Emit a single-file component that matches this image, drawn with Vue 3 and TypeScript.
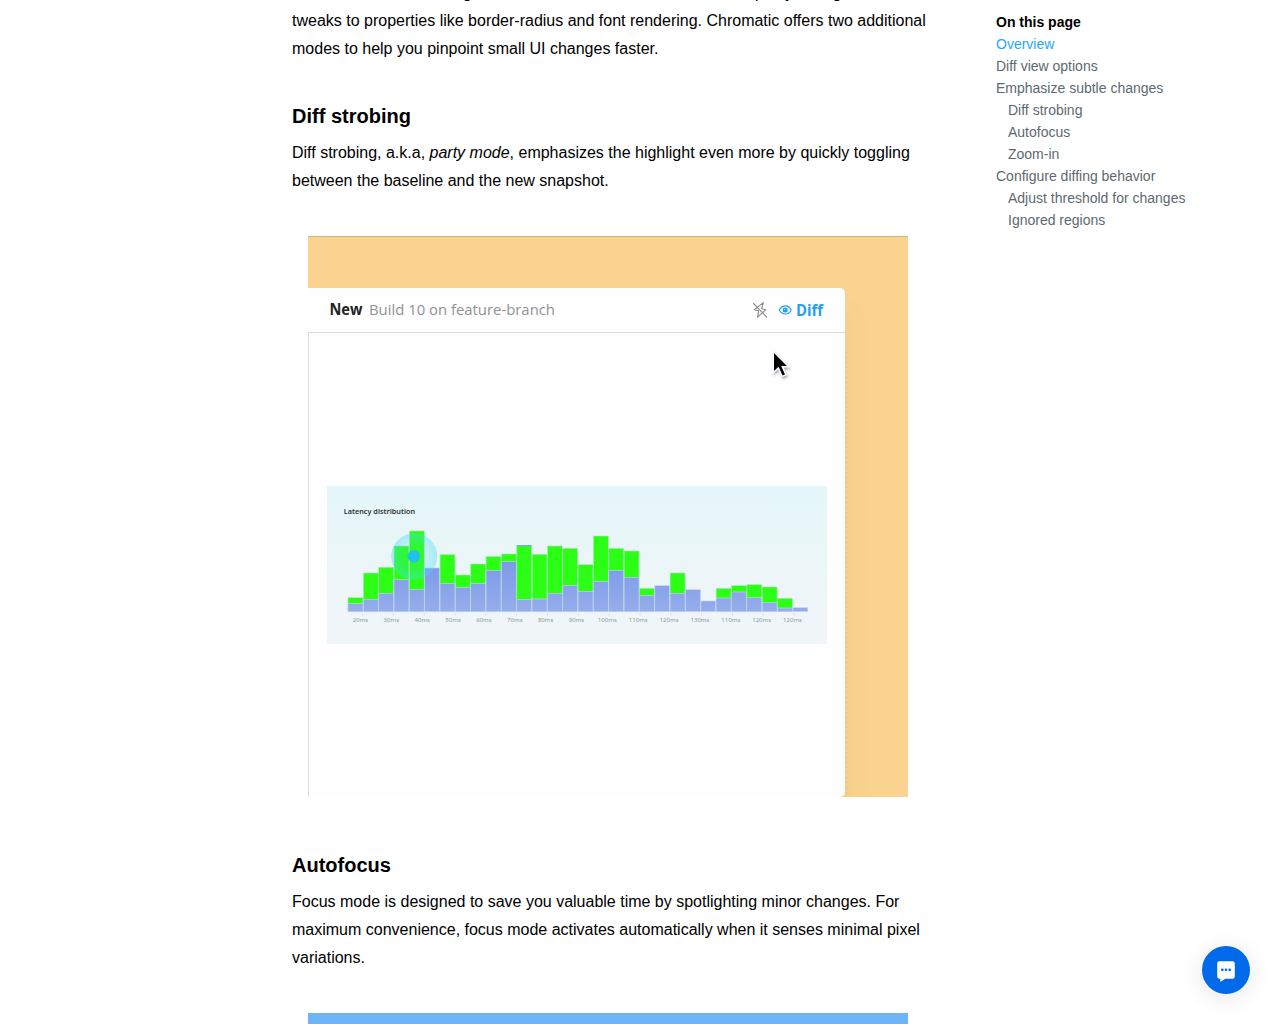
<script setup lang="ts">
interface TocItem { label: string; nested?: boolean; active?: boolean }

const toc: TocItem[] = [
  { label: 'Overview', active: true },
  { label: 'Diff view options' },
  { label: 'Emphasize subtle changes' },
  { label: 'Diff strobing', nested: true },
  { label: 'Autofocus', nested: true },
  { label: 'Zoom-in', nested: true },
  { label: 'Configure diffing behavior' },
  { label: 'Adjust threshold for changes', nested: true },
  { label: 'Ignored regions', nested: true },
]

// [height of the changed bar, height of the baseline bar], measured from the axis
const heights: [number, number][] = [
  [14, 8], [38.7, 12], [44.4, 18.4], [65.7, 32], [80.7, 22.4], [0, 43.7],
  [57, 28], [36.7, 24.4], [47.7, 28], [55.2, 41], [57.7, 50], [66.4, 12],
  [57.4, 12.7], [65.7, 18.4], [63.4, 26], [47, 20.4], [75.7, 30.4], [63.4, 41.4],
  [60.7, 34.4], [23.4, 16.4], [0, 26], [38.7, 18.4], [0, 22], [0, 10.7],
  [23.4, 13.7], [26, 19.7], [27, 14], [24.7, 9], [13.4, 3.7], [0, 4],
]
const axisY = 125.7
const pitch = 15.34
const bars = heights.map(([top, base], i) => ({ x: 21 + i * pitch, top, base }))

const labels = ['20ms', '30ms', '40ms', '50ms', '60ms', '70ms', '80ms', '90ms', '100ms', '110ms', '120ms', '130ms', '110ms', '120ms', '120ms']
const ticks = labels.map((text, i) => ({
  text,
  x: 35.6 + i * 30.82,
  labelX: 33.5 + i * 30.86,
  width: text.length > 4 ? 19 : 15.5,
}))
</script>

<template>
  <div class="page">
    <main class="content">
      <p class="lead">
        Certain faint visual changes are hard to notice on a diff. For example, you might miss<br />
        tweaks to properties like border-radius and font rendering. Chromatic offers two additional<br />
        modes to help you pinpoint small UI changes faster.
      </p>

      <h3>Diff strobing</h3>
      <p>
        Diff strobing, a.k.a, <em>party mode</em>, emphasizes the highlight even more by quickly toggling<br />
        between the baseline and the new snapshot.
      </p>

      <figure class="demo">
        <div class="window">
          <header class="bar">
            <svg class="title" width="240" height="44" viewBox="0 0 240 44">
              <text x="21.5" y="26.7" textLength="33" lengthAdjust="spacingAndGlyphs" class="new">New</text>
              <text x="61" y="26.7" textLength="186" lengthAdjust="spacingAndGlyphs" class="build">Build 10 on feature-branch</text>
            </svg>
            <svg class="tools" width="96" height="44" viewBox="0 0 96 44">
              <g fill="none" stroke="#8b8b8b" stroke-width="1.1" stroke-linejoin="round" stroke-linecap="round">
                <path d="M14.3 14.6 5.3 21.7 9.6 22.8 8.5 29.4 16.8 21.7 12.7 20.7Z" />
                <path d="M4.5 15.5 17.5 28.8" />
              </g>
              <path d="M30.2 22C33.2 16.5 39.5 16.5 42.2 22 39.5 27.4 33.2 27.4 30.2 22Z" fill="none" stroke="#1ea0f4" stroke-width="1.1" />
              <circle cx="36.2" cy="22" r="2.5" fill="#1ea0f4" />
              <circle cx="35.7" cy="21.3" r=".5" fill="#fff" />
              <text x="47" y="27.5" textLength="27" lengthAdjust="spacingAndGlyphs" class="diff">Diff</text>
            </svg>
          </header>
          <div class="canvas">
            <svg class="chart" width="500" height="158" viewBox="0 0 500 158">
              <defs>
                <linearGradient id="sky" x1="0" y1="0" x2="0" y2="1">
                  <stop offset="0" stop-color="#e4f6fa" />
                  <stop offset=".3" stop-color="#e8f6f8" />
                  <stop offset=".65" stop-color="#eef5f8" />
                  <stop offset="1" stop-color="#f0f5f8" />
                </linearGradient>
                <linearGradient id="column" gradientUnits="userSpaceOnUse" x1="0" y1="75" x2="0" y2="126">
                  <stop offset="0" stop-color="#7b99e8" />
                  <stop offset="1" stop-color="#96adec" />
                </linearGradient>
                <radialGradient id="pulse">
                  <stop offset="0" stop-color="#35cfea" stop-opacity=".05" />
                  <stop offset=".45" stop-color="#35cfea" stop-opacity=".14" />
                  <stop offset="1" stop-color="#48dcf5" stop-opacity=".43" />
                </radialGradient>
              </defs>
              <rect width="500" height="158" fill="url(#sky)" />
              <text x="16.7" y="28.4" textLength="71.5" lengthAdjust="spacingAndGlyphs" class="heading">Latency distribution</text>
              <g v-for="(bar, i) in bars" :key="i">
                <rect v-if="bar.top" :x="bar.x" :y="axisY - bar.top" width="14.9" :height="bar.top" fill="#2cff15" stroke="#a5ebbd" stroke-width=".6" />
                <rect :x="bar.x" :y="axisY - bar.base" width="14.9" :height="bar.base" fill="url(#column)" stroke="#c3d5f3" stroke-width=".6" />
              </g>
              <rect x="189.8" y="59.2" width="14.9" height="1" fill="#719ee9" />
              <circle cx="87.2" cy="70.3" r="23" fill="url(#pulse)" />
              <circle cx="86.8" cy="70.3" r="6.3" fill="#23c1e8" />
              <g v-for="(tick, i) in ticks" :key="i">
                <path :d="`M${tick.x} 127.5v2`" stroke="#c1c9ce" stroke-width=".6" />
                <text :x="tick.labelX" y="136.2" text-anchor="middle" :textLength="tick.width" lengthAdjust="spacingAndGlyphs" class="label">{{ tick.text }}</text>
              </g>
            </svg>
          </div>
        </div>
        <svg class="pointer" width="28" height="38" viewBox="0 0 28 38">
          <path d="M6.6 4.5V29l5.6-4.8 3.6 8.1 5.2-2.3-3.5-7.6H24Z" fill="#fff" />
          <path d="M8 8V26l4.6-4.2 3.9 8.7 2.5-1.1-3.8-8.4h5.7Z" fill="#000" />
        </svg>
      </figure>

      <h3>Autofocus</h3>
      <p>
        Focus mode is designed to save you valuable time by spotlighting minor changes. For<br />
        maximum convenience, focus mode activates automatically when it senses minimal pixel<br />
        variations.
      </p>
      <div class="next-demo"></div>
    </main>

    <nav class="toc">
      <div class="toc-title">On this page</div>
      <a v-for="item in toc" :key="item.label" :class="{ nested: item.nested, active: item.active }">{{ item.label }}</a>
    </nav>

    <button class="chat" aria-label="Open chat">
      <svg width="48" height="48" viewBox="0 0 48 48">
        <path d="M17.5 15.3h13a2.3 2.3 0 0 1 2.3 2.3v12.8a2.3 2.3 0 0 1-2.3 2.3h-7.2L19 35.4c-.5.3-1 .1-.9-.5l.3-2.2h-.9a2.3 2.3 0 0 1-2.3-2.3V17.6a2.3 2.3 0 0 1 2.3-2.3Z" fill="#fff" />
        <g fill="#006aeb"><circle cx="20.3" cy="23.8" r="1.35" /><circle cx="24" cy="23.8" r="1.35" /><circle cx="27.7" cy="23.8" r="1.35" /></g>
      </svg>
    </button>
  </div>
</template>

<style>
body { margin: 0; background: #fff; overflow: hidden; }
</style>

<style scoped>
.page {
  display: flex;
  box-sizing: border-box;
  width: 1280px;
  height: 1024px;
  padding-left: 292px;
  overflow: hidden;
  background: #fff;
  color: #000;
  font-family: "Liberation Sans", Arial, sans-serif;
}
.content { width: 648px; flex: none; }
p { margin: 0; font-size: 16px; line-height: 28px; white-space: nowrap; }
.lead { margin-top: -21px; }
h3 { margin: 39px 0 9px; font-size: 20px; line-height: 28px; font-weight: 700; }
.demo {
  position: relative;
  box-sizing: border-box;
  width: 600px;
  height: 561px;
  margin: 41px 0 54px 16px;
  padding-top: 51px;
  background: #f9d38f;
  border-top: 1px solid #ccb67b;
  overflow: hidden;
}
.window {
  width: 537px;
  height: 509px;
  border-radius: 0 5px 5px 0;
  background: #fefdff;
  box-shadow: 5px 24px 20px rgba(190, 170, 80, .1);
}
.window::after {
  content: "";
  position: absolute;
  left: 538px;
  top: 115px;
  bottom: 4px;
  width: 1px;
  background: repeating-linear-gradient(#d9b56c 0 1px, transparent 1px 5px);
}
.bar { display: flex; justify-content: space-between; height: 44px; }
.title { overflow: visible; }
.new, .build, .diff { font-family: "Open Sans", "Noto Sans", sans-serif; font-size: 15.3px; }
.new { font-weight: 700; fill: #222; }
.build { fill: #929292; }
.diff { font-weight: 700; fill: #1ea0f4; }
.canvas {
  box-sizing: border-box;
  height: 465px;
  padding: 153px 0 0 18px;
  border-top: 1px solid #d9dddf;
  border-left: 1px solid #d9dddf;
}
.chart { display: block; }
.heading { font: 600 7.3px "Noto Sans", sans-serif; fill: #333; }
.label { font: 6px "Noto Sans", sans-serif; fill: #929a9e; }
.pointer { position: absolute; left: 458px; top: 108px; filter: drop-shadow(1px 2px 1px rgba(0, 0, 0, .3)); }
.next-demo { width: 600px; height: 20px; margin: 41px 0 0 16px; background: #6fb4f7; }
.toc { display: flex; flex-direction: column; padding: 11px 0 0 56px; font-size: 14px; line-height: 22px; color: #5c6970; }
.toc-title { font-weight: 700; color: #000; }
.toc .nested { padding-left: 12px; }
.toc .active { color: #1ea7fd; }
.chat {
  position: fixed;
  left: 1202px;
  top: 946px;
  width: 48px;
  height: 48px;
  padding: 0;
  border: 0;
  border-radius: 50%;
  background: #006aeb;
  box-shadow: 0 4px 24px rgba(0, 0, 0, .1);
}
.chat svg { display: block; }
</style>
